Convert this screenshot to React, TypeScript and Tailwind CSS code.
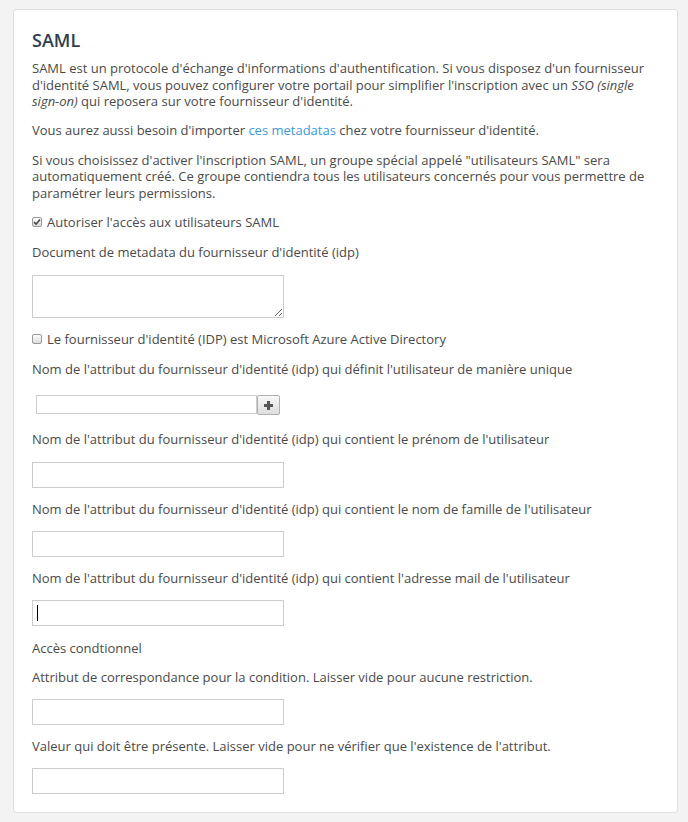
import React from "react";

function Checkbox({ checked }: { checked?: boolean }) {
  return (
    <span className="inline-flex h-[10px] w-[10px] shrink-0 items-center justify-center rounded-[2px] border border-[#9a9a9a] bg-gradient-to-b from-[#fdfdfd] to-[#dcdcdc]">
      {checked ? (
        <svg width="8" height="8" viewBox="0 0 8 8">
          <path d="M1 4.2 L3.1 6.2 L7 1.6" fill="none" stroke="#444" strokeWidth="1.6" />
        </svg>
      ) : null}
    </span>
  );
}

function Label({ children, className = "" }: { children: React.ReactNode; className?: string }) {
  return <div className={"mb-[14px] " + className}>{children}</div>;
}

function TextInput({ caret }: { caret?: boolean }) {
  return (
    <div className="relative mb-[12.5px] h-[26px] w-[252px]">
      <input
        type="text"
        className="h-[26px] w-[252px] border border-[#cccccc] bg-white px-[6px] outline-none"
      />
      {caret ? <span className="absolute left-[5px] top-[5px] h-[16px] w-px bg-black" /> : null}
    </div>
  );
}

export default function App() {
  return (
    <div
      className="min-h-[822px] bg-[#f3f3f3] pb-[9px] pl-[13px] pr-[10px] pt-[9px] text-[13px] leading-[16.5px] text-[#4a4a4a]"
      style={{ fontFamily: '"Open Sans", "Liberation Sans", sans-serif' }}
    >
      <div className="rounded-[3px] border border-[#e0e0e0] bg-white px-[18px] pb-[18px] pt-[18px]">
        <h2 className="mb-[8px] text-[18px] font-semibold leading-[24px] text-[#2f3d4c]">SAML</h2>
        <p className="mb-[12.5px]">
          SAML est un protocole d'échange d'informations d'authentification. Si vous disposez d'un fournisseur
          d'identité SAML, vous pouvez configurer votre portail pour simplifier l'inscription avec un{" "}
          <i>SSO (single sign-on)</i> qui reposera sur votre fournisseur d'identité.
        </p>
        <p className="mb-[13px]">
          Vous aurez aussi besoin d'importer <a className="text-[#3a9ad9]">ces metadatas</a> chez votre fournisseur
          d'identité.
        </p>
        <p className="mb-[13px]">
          Si vous choisissez d'activer l'inscription SAML, un groupe spécial appelé "utilisateurs SAML" sera
          automatiquement créé. Ce groupe contiendra tous les utilisateurs concernés pour vous permettre de
          paramétrer leurs permissions.
        </p>
        <div className="mb-[13.5px] flex items-center gap-[5px]">
          <Checkbox checked />
          <span>Autoriser l'accès aux utilisateurs SAML</span>
        </div>
        <Label className="!mb-[14.5px]">Document de metadata du fournisseur d'identité (idp)</Label>
        <textarea className="mb-[12.5px] block h-[43px] w-[252px] resize border border-[#cccccc] bg-white outline-none" />
        <div className="mb-[13.5px] flex items-center gap-[5px]">
          <Checkbox />
          <span>Le fournisseur d'identité (IDP) est Microsoft Azure Active Directory</span>
        </div>
        <Label className="!mb-[18px]">
          Nom de l'attribut du fournisseur d'identité (idp) qui définit l'utilisateur de manière unique
        </Label>
        <div className="mb-[16.5px] flex h-[19px] pl-[4px]">
          <input
            type="text"
            className="h-[19px] w-[221px] border border-[#cccccc] bg-white outline-none"
          />
          <button className="flex h-[20px] w-[23px] items-center justify-center rounded-[2px] border border-[#b0b0b0] bg-gradient-to-b from-[#f8f8f8] to-[#dedede]">
            <svg width="11" height="11" viewBox="0 0 11 11">
              <path d="M5.5 1 V10 M1 5.5 H10" stroke="#555" strokeWidth="3" />
            </svg>
          </button>
        </div>
        <Label className="!mb-[15px]">
          Nom de l'attribut du fournisseur d'identité (idp) qui contient le prénom de l'utilisateur
        </Label>
        <TextInput />
        <Label>Nom de l'attribut du fournisseur d'identité (idp) qui contient le nom de famille de l'utilisateur</Label>
        <TextInput />
        <Label>Nom de l'attribut du fournisseur d'identité (idp) qui contient l'adresse mail de l'utilisateur</Label>
        <div className="mb-[13.5px]">
          <div className="relative h-[26px] w-[252px]">
            <input
              type="text"
              className="h-[26px] w-[252px] border border-[#cccccc] bg-white px-[6px] outline-none"
            />
            <span className="absolute left-[5px] top-[5px] h-[16px] w-px bg-black" />
          </div>
        </div>
        <div className="mb-[12.5px]">Accès condtionnel</div>
        <Label>Attribut de correspondance pour la condition. Laisser vide pour aucune restriction.</Label>
        <TextInput />
        <Label>Valeur qui doit être présente. Laisser vide pour ne vérifier que l'existence de l'attribut.</Label>
        <div className="h-[26px] w-[252px]">
          <input
            type="text"
            className="h-[26px] w-[252px] border border-[#cccccc] bg-white px-[6px] outline-none"
          />
        </div>
      </div>
    </div>
  );
}
